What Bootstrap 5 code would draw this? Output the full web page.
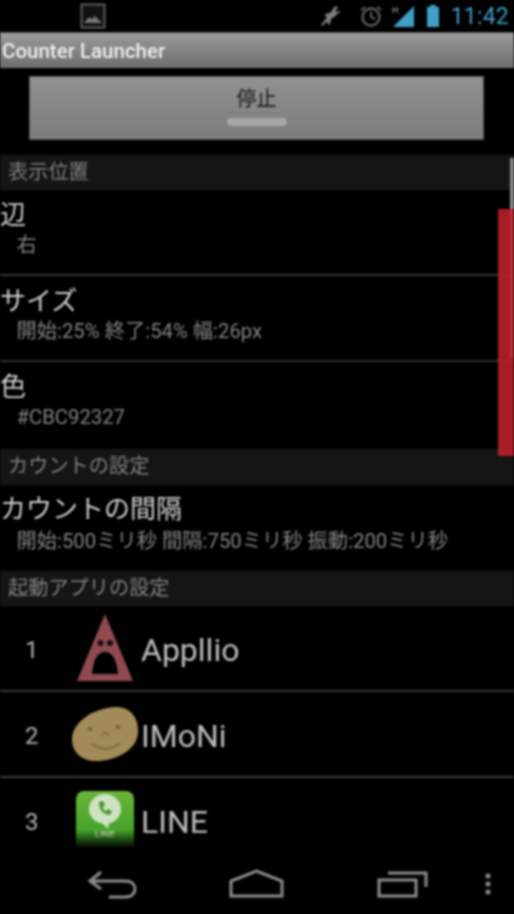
<!DOCTYPE html>
<html lang="ja">
<head>
<meta charset="utf-8">
<title>Counter Launcher</title>
<link href="https://cdn.jsdelivr.net/npm/bootstrap@5.3.0/dist/css/bootstrap.min.css" rel="stylesheet">
<style>
html,body{margin:0;height:914px;background:#000;overflow:hidden}
body{font-family:"Roboto","Noto Sans CJK JP",sans-serif;color:#c4c4c4}
.screen{width:514px;height:914px;background:#000;position:relative;filter:blur(.85px);overflow:hidden}
.statusbar{height:32px;padding:0 5px 0 80px}
.clock{color:#3f9fc6;font-size:23px;line-height:1;letter-spacing:.2px;margin-left:10px}
.appbar{height:36px;background:linear-gradient(#9a9a9a,#6e6e6e);color:#f0f0f0;font-size:20.500px;font-weight:500;line-height:36px;padding-left:2px;border-top:1px solid #555}
.btnwrap{height:87px;padding:8px 30px 15px 29px}
.stopbtn{height:64px;width:455px;background:linear-gradient(#919191,#7c7c7c);border:1px solid #555;border-radius:0;color:#2b2b2b;font-size:20px;font-weight:500;padding:9px 0 0;display:flex;flex-direction:column;align-items:center;line-height:26px}
.stopbtn:hover{background:#888;color:#2b2b2b}
.stopled{display:block;width:60px;height:8px;margin-top:6px;background:#a6a6a6;border-radius:5px}
.listarea{height:693px;overflow:hidden;-webkit-mask-image:linear-gradient(#000 675px,transparent 693px);mask-image:linear-gradient(#000 675px,transparent 693px)}
.sechead{height:36px;background:#151515;color:#808080;font-size:20.200px;line-height:35px;padding-left:8px}
.sechead.shorthead{height:35px}
.setrow{height:86px;border-bottom:2px solid #333;padding-top:8px}
.setrow.lastrow{height:87px;border-bottom:0}
.settitle{color:#cfcfcf;font-size:26px;line-height:35px;height:35px}
.setsub{color:#828282;font-size:20.300px;line-height:26px;padding-left:16.500px;margin-top:-1px;white-space:nowrap}
.countrow{height:86px;padding-top:7px}
.countrow .setsub{margin-top:1px}
.approw{height:86px;border-bottom:2px solid #3a3a3a}
.appnum{width:64px;padding-left:25px;font-size:24px;color:#b0b0b0;margin-top:3px}
.appicon{width:70px;height:70px;margin-left:6px;flex:none}
.appname{font-size:32px;color:#bdbdbd;margin-left:1px;margin-top:4px}
.scrollgrey{position:absolute;right:0;top:158px;width:4px;height:200px;background:#8a8a8a}
.counterbar{position:absolute;right:0;top:209px;width:16px;height:247px;background:rgba(190,32,42,.88)}
.navback{position:absolute;left:87px;top:870px}
.navhome{position:absolute;left:229px;top:869px}
.navrecent{position:absolute;left:376px;top:869px}
.navmenu{position:absolute;left:482px;top:872px}
</style>
</head>
<body>
<div class="screen d-flex flex-column">
  <div class="statusbar d-flex align-items-center justify-content-between">
    <svg width="26" height="26" viewBox="0 0 26 26"><rect x="1.500" y="1.500" width="23" height="23" fill="#111" stroke="#5d5d5d" stroke-width="2"/><path d="M4 20l5-6 3 2 3-3 7 7z" fill="#777"/></svg>
    <div class="d-flex align-items-center">
      <svg width="24" height="24" viewBox="0 0 24 24" class="muteicon"><path d="M2 21l6-8-3-2 7-3 4-6 3 1-3 5 6-1-7 6-3 2-1 6-4-3-3 4z" fill="#7c7c7c"/></svg>
      <svg width="24" height="24" viewBox="0 0 24 24" class="ms-3 me-2"><circle cx="12" cy="13" r="8.500" fill="none" stroke="#5e5e5e" stroke-width="2.400"/><path d="M12 8v5l4 2" fill="none" stroke="#5e5e5e" stroke-width="2"/><path d="M2 6l4-3M22 6l-4-3" stroke="#5e5e5e" stroke-width="2"/></svg>
      <svg width="26" height="26" viewBox="0 0 26 26" class="me-2"><path d="M2 24L23 3v21z" fill="#3f9fc6"/><text x="1" y="10" font-size="9" font-weight="700" fill="#777" font-family="Liberation Sans">H</text></svg>
      <svg width="16" height="24" viewBox="0 0 16 24"><path d="M5 1h6v2h3v20H2V3h3z" fill="#3f9fc6"/></svg>
      <span class="clock">11:42</span>
    </div>
  </div>
  <div class="appbar">Counter Launcher</div>
  <div class="btnwrap"><button type="button" class="btn stopbtn">停止<span class="stopled"></span></button></div>
  <div class="listarea">
    <div class="sechead shorthead">表示位置</div>
    <div class="setrow"><div class="settitle">辺</div><div class="setsub">右</div></div>
    <div class="setrow"><div class="settitle">サイズ</div><div class="setsub">開始:25% 終了:54% 幅:26px</div></div>
    <div class="setrow lastrow"><div class="settitle">色</div><div class="setsub">#CBC92327</div></div>
    <div class="sechead">カウントの設定</div>
    <div class="countrow"><div class="settitle">カウントの間隔</div><div class="setsub">開始:500ミリ秒 間隔:750ミリ秒 振動:200ミリ秒</div></div>
    <div class="sechead shorthead">起動アプリの設定</div>
    <div class="approw d-flex align-items-center">
      <div class="appnum">1</div>
      <svg class="appicon" viewBox="0 0 70 70"><path d="M35 1L63 68H7z" fill="#8e4a50"/><circle cx="30.500" cy="30" r="3" fill="#1a0b0c"/><circle cx="40" cy="30" r="3" fill="#1a0b0c"/><path d="M22 61q2-22 13-22t13 22z" fill="#000"/></svg>
      <div class="appname">Appllio</div>
    </div>
    <div class="approw d-flex align-items-center">
      <div class="appnum">2</div>
      <svg class="appicon" viewBox="0 0 70 70"><path d="M2 40C2 24 22 9 46 8c14 0 22 10 22 24 0 20-24 30-42 30C12 62 2 54 2 40z" fill="#a28b58"/><path d="M22 45q14 10 28-1" fill="none" stroke="#7d6a40" stroke-width="2"/><path d="M31 37l4-4 4 4" fill="none" stroke="#7d6a40" stroke-width="1.500"/><circle cx="20" cy="30" r="2.500" fill="#7d6a40"/><circle cx="48" cy="28" r="2.500" fill="#7d6a40"/></svg>
      <div class="appname">IMoNi</div>
    </div>
    <div class="approw d-flex align-items-center">
      <div class="appnum">3</div>
      <svg class="appicon" viewBox="0 0 70 70"><defs><linearGradient id="lg" x1="0" y1="0" x2="0" y2="1"><stop offset="0" stop-color="#6cb33a"/><stop offset="1" stop-color="#2f9a22"/></linearGradient></defs><rect x="6" y="6" width="58" height="64" rx="8" fill="url(#lg)"/><ellipse cx="35" cy="24" rx="16" ry="15" fill="#cfe3c3"/><path d="M31 37l7 7 1-7z" fill="#cfe3c3"/><path d="M29 17q0 12 11 13l2-4-4-2-2 2q-3-1-3-4l2-2-2-4z" fill="#4d9a35"/><text x="35" y="52" text-anchor="middle" font-size="9" font-weight="700" fill="#cfe3c3" font-family="Liberation Sans">LINE</text></svg>
      <div class="appname">LINE</div>
    </div>
  </div>
  <svg class="navback" width="52" height="30" viewBox="0 0 52 30"><path d="M14 2L3 11l11 8M3 11h36c12 0 12 16 0 16H22" fill="none" stroke="#8b8b8b" stroke-width="3"/></svg>
  <svg class="navhome" width="55" height="30" viewBox="0 0 55 30"><path d="M2 27V12L27.500 2 53 12v15z" fill="none" stroke="#8b8b8b" stroke-width="3"/></svg>
  <svg class="navrecent" width="54" height="30" viewBox="0 0 54 30"><rect x="3" y="11" width="37" height="16" fill="none" stroke="#8b8b8b" stroke-width="3"/><path d="M12 4h38v14" fill="none" stroke="#8b8b8b" stroke-width="3"/></svg>
  <svg class="navmenu" width="12" height="24" viewBox="0 0 12 24"><g fill="#8b8b8b"><circle cx="6" cy="4" r="2.500"/><circle cx="6" cy="12" r="2.500"/><circle cx="6" cy="20" r="2.500"/></g></svg>
  <div class="scrollgrey"></div>
  <div class="counterbar"></div>
</div>
<script src="https://cdn.jsdelivr.net/npm/bootstrap@5.3.0/dist/js/bootstrap.bundle.min.js"></script>
</body>
</html>
